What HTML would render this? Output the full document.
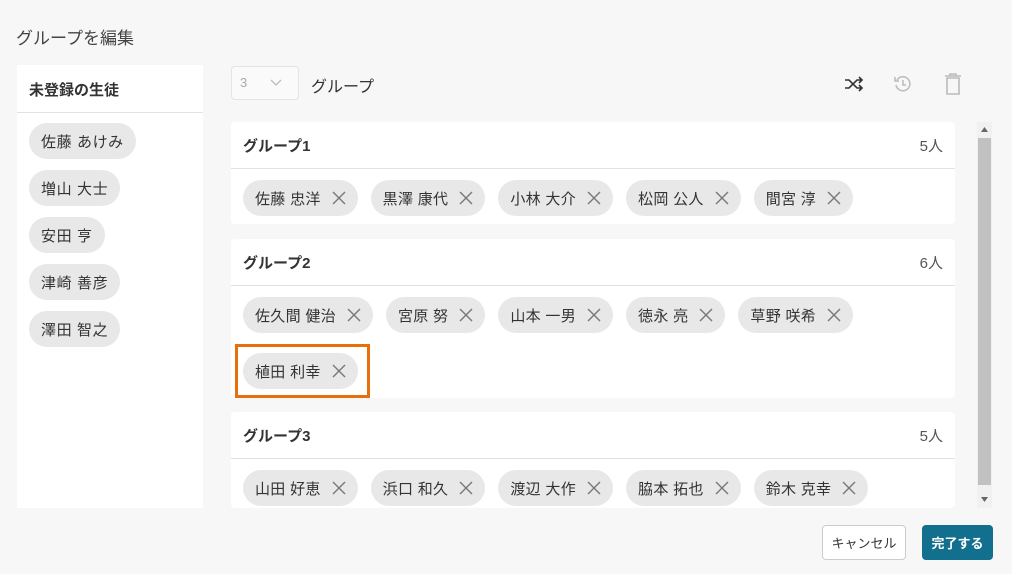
<!DOCTYPE html>
<html><head><meta charset="utf-8"><style>
*{box-sizing:border-box;margin:0;padding:0}
body{width:1012px;height:574px;background:#f7f7f7;font-family:"Liberation Sans","Noto Sans CJK JP",sans-serif;color:#333;position:relative;overflow:hidden}
.abs{position:absolute}
.chip{display:inline-flex;align-items:center;height:36px;border-radius:18px;background:#e8e8e8;padding:0 12px;font-size:15px;color:#333;white-space:nowrap;letter-spacing:.3px}
.chip svg{margin-left:11px}
.card{position:absolute;left:231px;width:724px;background:#fff;border-radius:4px;overflow:hidden}
.card .hd{height:47px;border-bottom:1px solid #e2e2e2;display:flex;align-items:center;justify-content:space-between;padding:0 12px;font-size:15px}
.card .hd b{font-weight:bold;color:#333}
.row{display:flex;gap:13px;padding:11px 12px 0 12px}
.left .chip{margin-bottom:11px;letter-spacing:.6px}
</style></head><body>
<div class="abs" style="left:16px;top:24px;font-size:17px;color:#444">グループを編集</div>
<div class="abs left" style="left:17px;top:65px;width:186px;height:443px;background:#fff">
 <div style="height:48px;border-bottom:1px solid #e2e2e2;padding:14px 0 0 12px;font-size:15px;font-weight:bold">未登録の生徒</div>
 <div style="padding:10px 0 0 12px;display:flex;flex-direction:column;align-items:flex-start">
  <span class="chip">佐藤 あけみ</span><span class="chip">増山 大士</span><span class="chip">安田 亨</span><span class="chip">津崎 善彦</span><span class="chip">澤田 智之</span>
 </div>
</div>
<div class="abs" style="left:231px;top:66px;width:68px;height:34px;border:1px solid #e4e4e4;border-radius:4px;background:#fafafa">
 <span class="abs" style="left:8px;top:8px;font-size:13px;color:#aaa">3</span>
 <svg class="abs" style="left:38px;top:12px" width="12" height="8"><path d="M1 1l5 5 5-5" fill="none" stroke="#bbb" stroke-width="1.3"/></svg>
</div>
<div class="abs" style="left:311px;top:73px;font-size:16px">グループ</div>
<svg class="abs" style="left:843px;top:74px" width="22" height="20" viewBox="0 0 22 20"><path d="M2 6h4l8 8h5M2 14h4l8-8h5M16 3l3 3-3 3M16 11l3 3-3 3" fill="none" stroke="#333" stroke-width="1.6"/></svg>
<svg class="abs" style="left:893px;top:74px" width="20" height="20" viewBox="0 0 20 20"><path d="M4 6A7 7 0 1 1 3 11" fill="none" stroke="#bbb" stroke-width="1.5"/><path d="M2 3v4h4" fill="none" stroke="#bbb" stroke-width="1.5"/><path d="M10 6v5h3" fill="none" stroke="#bbb" stroke-width="1.5"/></svg>
<svg class="abs" style="left:944px;top:73px" width="18" height="22" viewBox="0 0 18 22"><path d="M1 3h16M6 3V1h6v2M3 5h12v16H3z" fill="none" stroke="#bbb" stroke-width="1.6"/></svg>

<div class="card" style="top:122px;height:102px">
 <div class="hd"><b>グループ1</b><span style="color:#555">5人</span></div>
 <div class="row"><span class="chip">佐藤 忠洋<svg width="14" height="14"><path d="M1 1l12 12M13 1L1 13" stroke="#777" stroke-width="1.4"/></svg></span><span class="chip">黒澤 康代<svg width="14" height="14"><path d="M1 1l12 12M13 1L1 13" stroke="#777" stroke-width="1.4"/></svg></span><span class="chip">小林 大介<svg width="14" height="14"><path d="M1 1l12 12M13 1L1 13" stroke="#777" stroke-width="1.4"/></svg></span><span class="chip">松岡 公人<svg width="14" height="14"><path d="M1 1l12 12M13 1L1 13" stroke="#777" stroke-width="1.4"/></svg></span><span class="chip">間宮 淳<svg width="14" height="14"><path d="M1 1l12 12M13 1L1 13" stroke="#777" stroke-width="1.4"/></svg></span></div>
</div>
<div class="card" style="top:239px;height:159px">
 <div class="hd"><b>グループ2</b><span style="color:#555">6人</span></div>
 <div class="row"><span class="chip">佐久間 健治<svg width="14" height="14"><path d="M1 1l12 12M13 1L1 13" stroke="#777" stroke-width="1.4"/></svg></span><span class="chip">宮原 努<svg width="14" height="14"><path d="M1 1l12 12M13 1L1 13" stroke="#777" stroke-width="1.4"/></svg></span><span class="chip">山本 一男<svg width="14" height="14"><path d="M1 1l12 12M13 1L1 13" stroke="#777" stroke-width="1.4"/></svg></span><span class="chip">徳永 亮<svg width="14" height="14"><path d="M1 1l12 12M13 1L1 13" stroke="#777" stroke-width="1.4"/></svg></span><span class="chip">草野 咲希<svg width="14" height="14"><path d="M1 1l12 12M13 1L1 13" stroke="#777" stroke-width="1.4"/></svg></span></div>
 <div class="row" style="padding-top:20px"><span class="chip">植田 利幸<svg width="14" height="14"><path d="M1 1l12 12M13 1L1 13" stroke="#777" stroke-width="1.4"/></svg></span></div>
</div>
<div class="abs" style="left:235px;top:344px;width:135px;height:54px;border:3px solid #e8700a"></div>
<div class="card" style="top:412px;height:96px">
 <div class="hd"><b>グループ3</b><span style="color:#555">5人</span></div>
 <div class="row"><span class="chip">山田 好恵<svg width="14" height="14"><path d="M1 1l12 12M13 1L1 13" stroke="#777" stroke-width="1.4"/></svg></span><span class="chip">浜口 和久<svg width="14" height="14"><path d="M1 1l12 12M13 1L1 13" stroke="#777" stroke-width="1.4"/></svg></span><span class="chip">渡辺 大作<svg width="14" height="14"><path d="M1 1l12 12M13 1L1 13" stroke="#777" stroke-width="1.4"/></svg></span><span class="chip">脇本 拓也<svg width="14" height="14"><path d="M1 1l12 12M13 1L1 13" stroke="#777" stroke-width="1.4"/></svg></span><span class="chip">鈴木 克幸<svg width="14" height="14"><path d="M1 1l12 12M13 1L1 13" stroke="#777" stroke-width="1.4"/></svg></span></div>
</div>
<div class="abs" style="left:977px;top:122px;width:15px;height:386px;background:#f1f1f1">
 <svg class="abs" style="left:4px;top:5px" width="7" height="5"><path d="M0 5L3.5 0 7 5z" fill="#666"/></svg>
 <div class="abs" style="left:1px;top:16px;width:13px;height:347px;background:#c1c1c1"></div>
 <svg class="abs" style="left:4px;top:375px" width="7" height="5"><path d="M0 0L3.5 5 7 0z" fill="#666"/></svg>
</div>
<div class="abs" style="left:822px;top:525px;width:84px;height:35px;border:1px solid #ccc;border-radius:4px;background:#fff;font-size:13px;display:flex;align-items:center;justify-content:center">キャンセル</div>
<div class="abs" style="left:922px;top:525px;width:71px;height:35px;border-radius:4px;background:#126f8d;color:#fff;font-size:13px;font-weight:bold;display:flex;align-items:center;justify-content:center">完了する</div>
</body></html>
